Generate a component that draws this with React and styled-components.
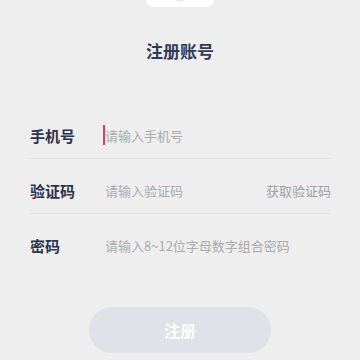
import React from 'react';
import styled, {createGlobalStyle} from 'styled-components';

const GlobalStyle = createGlobalStyle`
  html, body {
    margin: 0;
    padding: 0;
    background: #eeeeee;
  }
  * {
    box-sizing: border-box;
  }
`;

const FONT = "'Noto Sans CJK SC', 'Noto Sans', sans-serif";

const Page = styled.div`
  width: 360px;
  height: 360px;
  overflow: hidden;
  background: #eeeeee;
  font-family: ${FONT};
  display: flex;
  flex-direction: column;
  align-items: center;
`;

const Logo = styled.div`
  width: 68px;
  height: 16px;
  margin-top: -9px;
  background: #ffffff;
  border-radius: 7px;
  display: flex;
  justify-content: center;
`;

const LogoMark = styled.div`
  width: 10px;
  height: 10px;
  background: #dcecf8;
  border-radius: 0 0 3px 3px;
`;

const Title = styled.h1`
  margin: 32px 0 0;
  font-size: 17px;
  line-height: 24px;
  font-weight: 700;
  color: #333b54;
`;

const Form = styled.div`
  width: 302px;
  margin-top: 41px;
  display: flex;
  flex-direction: column;
`;

const Row = styled.div`
  height: 55px;
  padding-top: 8px;
  display: flex;
  align-items: center;
  border-bottom: 1px solid ${({last}) => (last ? 'transparent' : '#e4e4e6')};
`;

const Label = styled.span`
  width: 75px;
  flex-shrink: 0;
  padding-left: 1px;
  font-size: 15px;
  font-weight: 700;
  color: #2c334c;
`;

const Field = styled.div`
  position: relative;
  flex: 1;
  display: flex;
  align-items: center;
`;

const Input = styled.input`
  flex: 1;
  min-width: 0;
  border: none;
  outline: none;
  background: transparent;
  padding: 0 0 0 1px;
  font-family: ${FONT};
  font-size: 13px;
  color: #333;
  &::placeholder {
    color: #ababab;
  }
`;

const Caret = styled.span`
  position: absolute;
  left: -1px;
  top: 50%;
  width: 2px;
  height: 20px;
  margin-top: -10px;
  background: #e2356f;
`;

const CodeLink = styled.span`
  flex-shrink: 0;
  font-size: 13px;
  color: #a0a0a0;
`;

const Submit = styled.button`
  width: 182px;
  height: 46px;
  margin-top: 38px;
  border: none;
  border-radius: 23px;
  background: #e0e1e9;
  color: #ffffff;
  font-family: ${FONT};
  font-size: 16px;
  font-weight: 700;
`;

const App = () => (
  <Page>
    <GlobalStyle />
    <Logo>
      <LogoMark />
    </Logo>
    <Title>注册账号</Title>
    <Form>
      <Row>
        <Label>手机号</Label>
        <Field>
          <Caret />
          <Input placeholder="请输入手机号" />
        </Field>
      </Row>
      <Row>
        <Label>验证码</Label>
        <Field>
          <Input placeholder="请输入验证码" />
        </Field>
        <CodeLink>获取验证码</CodeLink>
      </Row>
      <Row last>
        <Label>密码</Label>
        <Field>
          <Input type="password" placeholder="请输入8~12位字母数字组合密码" />
        </Field>
      </Row>
    </Form>
    <Submit>注册</Submit>
  </Page>
);

export default App;
